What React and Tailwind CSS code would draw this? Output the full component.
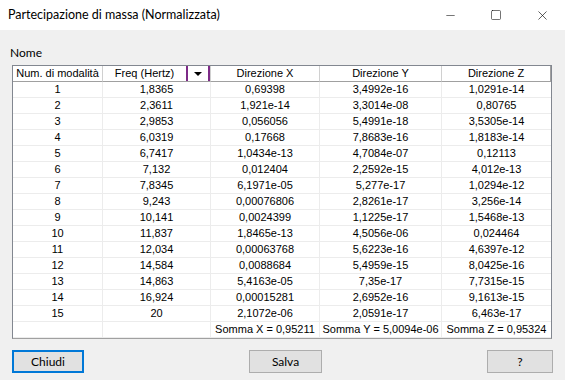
import { Minus, Square, X } from 'lucide-react';

const rows = [
  ['1', '1,8365', '0,69398', '3,4992e-16', '1,0291e-14'],
  ['2', '2,3611', '1,921e-14', '3,3014e-08', '0,80765'],
  ['3', '2,9853', '0,056056', '5,4991e-18', '3,5305e-14'],
  ['4', '6,0319', '0,17668', '7,8683e-16', '1,8183e-14'],
  ['5', '6,7417', '1,0434e-13', '4,7084e-07', '0,12113'],
  ['6', '7,132', '0,012404', '2,2592e-15', '4,012e-13'],
  ['7', '7,8345', '6,1971e-05', '5,277e-17', '1,0294e-12'],
  ['8', '9,243', '0,00076806', '2,8261e-17', '3,256e-14'],
  ['9', '10,141', '0,0024399', '1,1225e-17', '1,5468e-13'],
  ['10', '11,837', '1,8465e-13', '4,5056e-06', '0,024464'],
  ['11', '12,034', '0,00063768', '5,6223e-16', '4,6397e-12'],
  ['12', '14,584', '0,0088684', '5,4959e-15', '8,0425e-16'],
  ['13', '14,863', '5,4163e-05', '7,35e-17', '7,7315e-15'],
  ['14', '16,924', '0,00015281', '2,6952e-16', '9,1613e-15'],
  ['15', '20', '2,1072e-06', '2,0591e-17', '6,463e-17'],
  ['', '', 'Somma X = 0,95211', 'Somma Y = 5,0094e-06', 'Somma Z = 0,95324'],
];

const ui = { fontFamily: 'Lato, "Segoe UI", sans-serif' };
const grid = { fontFamily: '"Liberation Sans", Arial, sans-serif' };

function HeaderCell({ children, last }) {
  return (
    <div
      className={`flex h-[16px] items-center justify-center border-b border-[#a0a0a0] bg-white text-[11px] leading-none text-black ${
        last ? 'border-r border-r-[#a0a0a0]' : 'border-r border-r-[#d0d0d0]'
      }`}
    >
      {children}
    </div>
  );
}

export default function App() {
  return (
    <div className="flex h-[380px] w-[565px] flex-col overflow-hidden bg-[#f0f0f0]" style={ui}>
      {/* Title bar */}
      <div className="flex h-[30px] shrink-0 items-center bg-white">
        <span className="flex-1 pl-[8px] text-[12.5px] text-black">
          Partecipazione di massa (Normalizzata)
        </span>
        <div className="flex h-full w-[46px] items-center justify-center text-black">
          <Minus size={13} strokeWidth={1} />
        </div>
        <div className="flex h-full w-[46px] items-center justify-center text-black">
          <Square size={12} strokeWidth={1.1} />
        </div>
        <div className="flex h-full w-[46px] items-center justify-center text-black">
          <X size={15} strokeWidth={1} />
        </div>
      </div>

      <div className="flex flex-1 flex-col px-[12px]">
        <div className="-ml-[2px] mt-[15px] h-[16px] text-[12px] leading-[16px] text-black">Nome</div>

        {/* Grid */}
        <div
          className="mt-[4px] w-[540px] border border-[#828790] border-b-[#a0a0a0] bg-white"
          style={grid}
        >
          <div className="grid grid-cols-[90px_108px_109px_122px_109px]">
            <HeaderCell>Num. di modalità</HeaderCell>
            <div className="flex h-[16px] border-b border-r border-[#a0a0a0] border-r-[#d0d0d0] bg-white text-[11px] leading-none text-black">
              <span className="flex flex-1 items-center justify-center">Freq (Hertz)</span>
              <span className="w-[2px] bg-[#7d2a87]" />
              <span className="flex w-[20px] items-center justify-center">
                <svg width="8" height="4" viewBox="0 0 8 4">
                  <polygon points="0,0 8,0 4,4" fill="#000" />
                </svg>
              </span>
              <span className="w-[2px] bg-[#7d2a87]" />
            </div>
            <HeaderCell>Direzione X</HeaderCell>
            <HeaderCell>Direzione Y</HeaderCell>
            <HeaderCell last>Direzione Z</HeaderCell>

            {rows.map((r, i) =>
              r.map((v, j) => (
                <div
                  key={`${i}-${j}`}
                  className={`flex h-[16px] items-center justify-center border-b border-[#ececec] text-[11px] leading-none text-black ${
                    j < 4 ? 'border-r' : ''
                  }`}
                >
                  {v}
                </div>
              ))
            )}
          </div>
        </div>

        {/* Buttons */}
        <div className="mt-[11px] flex items-center justify-between text-[12px] text-black">
          <button className="h-[23px] w-[72px] border-2 border-[#0078d7] bg-[#e1e1e1]">Chiudi</button>
          <button className="h-[23px] w-[73px] border border-[#adadad] bg-[#e1e1e1]">Salva</button>
          <button className="h-[23px] w-[66px] border border-[#adadad] bg-[#e1e1e1]">?</button>
        </div>
      </div>
    </div>
  );
}
